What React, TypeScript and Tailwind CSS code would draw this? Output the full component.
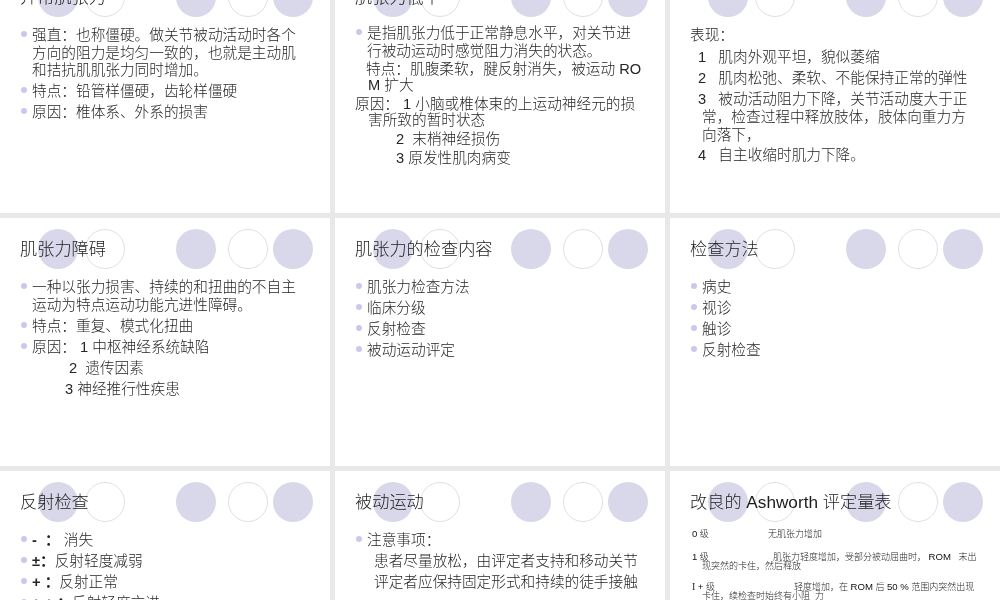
import React from "react";

const Dots = () => (
  <div className="absolute top-[11px] left-0 w-full flex items-center pl-[38px]">
    <span className="w-[40px] h-[40px] rounded-full bg-[#d8d8ea] shrink-0" />
    <span className="w-[40px] h-[40px] rounded-full border border-[#dfdfe8] bg-white ml-[7px] shrink-0" />
    <span className="w-[40px] h-[40px] rounded-full bg-[#d8d8ea] ml-[51px] shrink-0" />
    <span className="w-[40px] h-[40px] rounded-full border border-[#dfdfe8] bg-white ml-[12px] shrink-0" />
    <span className="w-[40px] h-[40px] rounded-full bg-[#d8d8ea] ml-[5px] shrink-0" />
  </div>
);

const Slide = ({ title, children }: { title?: React.ReactNode; children?: React.ReactNode }) => (
  <section className="relative bg-white h-full overflow-hidden">
    <Dots />
    <div className="relative">
      <h2 className="h-[61px] pl-[20px] pt-[20px] text-[17.2px] leading-[22px] font-light text-[#1c1c1c] whitespace-nowrap">
        {title}
      </h2>
      <div className="text-[14.67px] leading-[17.5px] font-light text-[#262626] whitespace-nowrap">{children}</div>
    </div>
  </section>
);

const Li = ({ children, className = "mb-[3.5px]" }: { children: React.ReactNode; className?: string }) => (
  <div className={`flex ${className}`}>
    <span className="w-[6px] h-[6px] rounded-full bg-[#c9c9ee] ml-[21px] mr-[5px] mt-[4px] shrink-0" />
    <div>{children}</div>
  </div>
);

const Row = ({ children }: { children: React.ReactNode }) => <div className="flex">{children}</div>;

const Lat = ({ children }: { children: React.ReactNode }) => <span className="text-[9.6px] font-normal text-[#111111]">{children}</span>;

export default function App() {
  return (
    <div
      className="w-[1000px] h-[600px] overflow-hidden bg-[#e8e8e8] blur-[0.35px]"
      style={{ fontFamily: '"Liberation Sans", "Noto Sans CJK SC", sans-serif' }}
    >
      <div className="grid grid-cols-3 grid-rows-[247px_248px_248px] gap-x-[5px] gap-y-[5px] mt-[-34px]">
        <Slide title="异常肌张力">
          <Li>
            强直：也称僵硬。做关节被动活动时各个
            <br />
            方向的阻力是均匀一致的，也就是主动肌
            <br />
            和拮抗肌肌张力同时增加。
          </Li>
          <Li>特点：铅管样僵硬，齿轮样僵硬</Li>
          <Li>原因：椎体系、外系的损害</Li>
        </Slide>

        <Slide title="肌张力低下">
          <div className="-mt-[2px]">
            <Li className="mb-[0.5px]">
              是指肌张力低于正常静息水平，对关节进
              <br />
              行被动运动时感觉阻力消失的状态。
            </Li>
            <div className="pl-[31px] leading-[16.5px] mb-[2px]">
              特点：肌腹柔软，腱反射消失，被运动 RO
              <br />
              <span className="pl-[2px]">M 扩大</span>
            </div>
            <div className="pl-[20px] leading-[16.5px] mb-[2px]">
              原因： 1 小脑或椎体束的上运动神经元的损
              <br />
              <span className="pl-[13px]">害所致的暂时状态</span>
            </div>
            <div className="pl-[61px] mb-[2px]">2&nbsp; 末梢神经损伤</div>
            <div className="pl-[61px]">3 原发性肌肉病变</div>
          </div>
        </Slide>

        <Slide>
          <div className="pl-[20px]">表现：</div>
          <div className="pl-[28px] mt-[4px]">1 &nbsp; 肌肉外观平坦，貌似萎缩</div>
          <div className="pl-[28px] mt-[3.5px]">2 &nbsp; 肌肉松弛、柔软、不能保持正常的弹性</div>
          <div className="pl-[28px] mt-[2.5px] leading-[18px]">
            3 &nbsp; 被动活动阻力下降，关节活动度大于正
            <br />
            <span className="pl-[4px]">常，检查过程中释放肢体，肢体向重力方</span>
            <br />
            <span className="pl-[4px]">向落下，</span>
          </div>
          <div className="pl-[28px] mt-[3px]">4 &nbsp; 自主收缩时肌力下降。</div>
        </Slide>

        <Slide title="肌张力障碍">
          <Li>
            一种以张力损害、持续的和扭曲的不自主
            <br />
            运动为特点运动功能亢进性障碍。
          </Li>
          <Li>特点：重复、模式化扭曲</Li>
          <Li>原因： 1 中枢神经系统缺陷</Li>
          <div className="pl-[69px] mb-[4px]">2&nbsp; 遗传因素</div>
          <div className="pl-[65px]">3 神经推行性疾患</div>
        </Slide>

        <Slide title="肌张力的检查内容">
          <Li>肌张力检查方法</Li>
          <Li>临床分级</Li>
          <Li>反射检查</Li>
          <Li>被动运动评定</Li>
        </Slide>

        <Slide title="检查方法">
          <Li>病史</Li>
          <Li>视诊</Li>
          <Li>触诊</Li>
          <Li>反射检查</Li>
        </Slide>

        <Slide title="反射检查">
          <Li>
            <span className="font-bold">-</span>&nbsp; <span className="font-bold">：</span>&nbsp;消失
          </Li>
          <Li>
            <span className="font-bold">±：</span>反射轻度减弱
          </Li>
          <Li>
            <span className="font-bold">+ ：</span>反射正常
          </Li>
          <Li>
            <span className="font-bold">+ + ：</span>反射轻度亢进
          </Li>
        </Slide>

        <Slide title="被动运动">
          <Li>注意事项：</Li>
          <div className="pl-[39px] mb-[3.5px]">患者尽量放松，由评定者支持和移动关节</div>
          <div className="pl-[39px]">评定者应保持固定形式和持续的徒手接触</div>
        </Slide>

        <Slide title="改良的 Ashworth 评定量表">
          <div className="text-[9px] leading-[8.5px] text-[#262626] pl-[22px] -mt-[2px]">
            <Row>
              <span className="w-[76px]"><Lat>0</Lat> 级</span>
              <span>无肌张力增加</span>
            </Row>
            <div className="mt-[14.5px]">
              <Row>
                <span className="w-[81px]"><Lat>1</Lat> 级</span>
                <span>肌张力轻度增加，受部分被动屈曲时， <Lat>ROM</Lat> &nbsp; 末出</span>
              </Row>
              <div className="pl-[10px]">现突然的卡住，然后释放</div>
            </div>
            <div className="mt-[13px]">
              <Row>
                <span className="w-[102px]"><span className="font-['Liberation_Serif'] text-[10px] font-normal">I</span> <Lat>+</Lat> 级</span>
                <span>轻度增加，在 <Lat>ROM</Lat> 后 <Lat>50 %</Lat> 范围内突然出现</span>
              </Row>
              <div className="pl-[10px]">卡住，续检查时始终有小阻 &nbsp;力</div>
            </div>
          </div>
        </Slide>
      </div>
    </div>
  );
}
